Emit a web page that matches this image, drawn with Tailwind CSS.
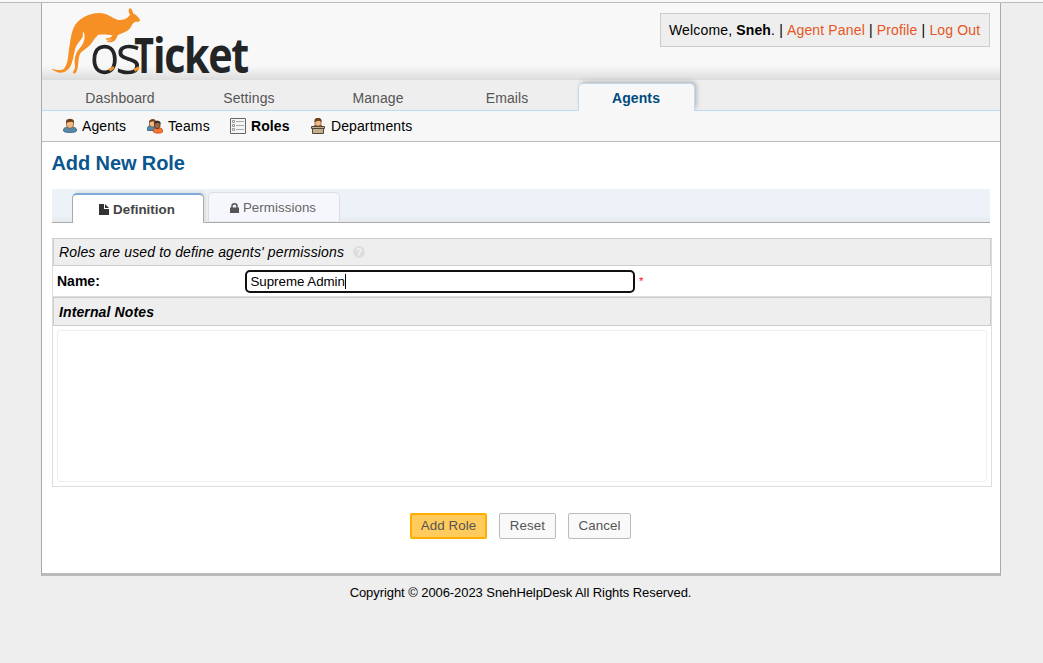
<!DOCTYPE html>
<html lang="en">
<head>
<meta charset="utf-8">
<title>Add New Role</title>
<script src="https://cdn.jsdelivr.net/npm/@tailwindcss/browser@4"></script>
</head>
<body class="h-[663px] overflow-hidden bg-[#eee] font-['Liberation_Sans',Arial,sans-serif] text-[14px] text-black">
<div class="h-[3px] border-b border-[#bbb] bg-[#f7f7f7]"></div>
<div class="ml-[41px] flex h-[573px] w-[960px] flex-col border-x border-b-3 border-x-[#aaa] border-b-[#bbb] bg-white">
  <header class="flex h-[77px] shrink-0 items-start justify-between border-b border-[#ddd] bg-linear-to-b from-[#f8f8f8] from-82% to-[#dfdfdf] pr-[10px] pl-[8px]">
    <svg class="mt-[2px] h-[74px] w-[200px] overflow-visible" viewBox="0 0 600 222" role="img" aria-label="osTicket">
      <path fill="#f79024" d="M4 192C20 193 35 201 44 188C56 172 54 145 59 120C64 88 68 62 88 46C108 29 138 20 164 26C183 31 193 45 211 45C224 44 235 38 240 29C235 22 234 13 239 10C244 8 248 17 249 25C257 28 266 37 270 44C270 49 267 51 260 50C252 50 248 55 243 65C235 80 216 84 205 89C199 94 202 101 191 109C185 113 174 113 169 108C172 105 181 108 186 104C180 104 169 106 166 101C172 99 182 99 188 92C177 88 157 88 145 89C135 96 129 110 121 119C109 132 94 137 89 149C84 162 86 179 82 193C79 202 76 208 70 205C65 202 76 194 75 182C71 162 77 144 89 130C101 116 108 98 101 80C97 84 99 91 98 96C92 106 78 119 74 137C68 164 66 188 47 199C32 208 17 201 4 192Z"/>
      <g fill="#222426" font-family="'Open Sans',sans-serif">
        <text x="121" y="203" font-size="154" font-weight="300" stroke="#222426" stroke-width="4" textLength="86" lengthAdjust="spacingAndGlyphs">o</text>
        <text x="199" y="203" font-size="154" font-weight="300" stroke="#222426" stroke-width="4" textLength="74" lengthAdjust="spacingAndGlyphs">s</text>
        <text x="253" y="203" font-size="146" font-weight="700" textLength="59" lengthAdjust="spacingAndGlyphs">T</text>
        <text x="309" y="203" font-size="146" font-weight="700" letter-spacing="-5" textLength="284" lengthAdjust="spacingAndGlyphs">icket</text>
      </g>
      <path d="M178 196L192 187M253 196L267 188" stroke="#f79024" stroke-width="9"/>
    </svg>
    <p class="mt-[10px] flex h-[34px] w-[330px] items-center border border-[#ccc] bg-[#eee] pl-[8px] whitespace-pre tracking-[0.15px]">Welcome, <b>Sneh</b>. | <a class="text-[#e65524]">Agent Panel</a> | <a class="text-[#e65524]">Profile</a> | <a class="text-[#e65524]">Log Out</a></p>
  </header>
  <nav class="flex h-[31px] shrink-0 items-end border-b border-[#bfd9ee] bg-[#eee] pl-[19.500px] text-center leading-[24px] tracking-[0.1px] text-[#555]">
    <a class="mr-[12px] w-[117px]">Dashboard</a>
    <a class="mr-[12px] w-[117px]">Settings</a>
    <a class="mr-[12px] w-[117px]">Manage</a>
    <a class="mr-[12.500px] w-[117px]">Emails</a>
    <a class="-mb-px h-[28px] w-[117px] rounded-t-[5px] border border-b-0 border-[#bfd9ee] bg-[#f7f7f7] pt-[2px] pr-[1px] font-bold text-[#004a80] shadow-[2px_-2px_5px_-1px_#aaa] [clip-path:inset(-8px_-8px_0_-8px)]">Agents</a>
  </nav>
  <nav class="flex h-[31px] shrink-0 items-center border-b border-[#bbb] bg-[#f7f7f7] pl-[20px] tracking-[0.1px]">
    <a class="flex w-[85px] items-center gap-[4px]">
      <svg class="h-4 w-4" viewBox="0 0 16 16"><path fill="#5489a8" stroke="#36617e" stroke-width=".8" d="M1.500 13C1 10 3 9 8 9s7 1 6.500 4c-1 2-12 2-13 0Z"/><path fill="#f2ba86" stroke="#85502a" stroke-width=".8" d="M4.500 3.500h7v3c0 5-7 5-7 0Z"/><path fill="#70401c" d="M4 5V3c1-3 7-3 8 0v2L10 3.500 7 4Z"/></svg>Agents</a>
    <a class="flex w-[83px] items-center gap-[5px]">
      <svg class="h-4 w-4" viewBox="0 0 16 16"><path fill="#5489a8" stroke="#36617e" stroke-width=".8" d="M.500 12.500C0 8 2 7 6 7l4 2-2 3.500Z"/><path fill="#f2ba86" stroke="#85502a" stroke-width=".8" d="M2.500 3h6v3c0 4-6 4-6 0Z"/><path fill="#70401c" d="M2 4.500c0-4 6-5 7-1v1L6 3Z"/><path fill="#f47532" stroke="#c44615" stroke-width=".8" d="M6.500 14C6 10 8 10 11 10s5 0 4.500 4c-1 1.500-8 1.500-9 0Z"/><path fill="#9b673e" stroke="#38281e" stroke-width=".8" d="M7.500 5.500c0-3 5.500-3 5.500 0v2c0 4-5.500 4-5.500 0Z"/><path fill="#332820" d="M7 6c0-4 6-4 6.500-1v1L11 4.500Z"/></svg>Teams</a>
    <a class="flex w-[80px] items-center gap-[5px] font-bold">
      <svg class="h-4 w-4" viewBox="0 0 16 16"><path fill="#f5f5f5" stroke="#666" d="M.500.500h15v15H.500Z"/><path stroke="#aaa" d="M6 3.500h8M6 7.500h8M6 11.500h8"/><path fill="#fff" stroke="#999" d="M2.500 2.500h2v2h-2ZM2.500 6.500h2v2h-2ZM2.500 10.500h2v2h-2Z"/></svg>Roles</a>
    <a class="flex items-center gap-[5px]">
      <svg class="h-4 w-4" viewBox="0 0 16 16"><path fill="#c95b32" stroke="#70402a" stroke-width=".8" d="M3.500 9C3.500 6 12.500 6 12.500 9Z"/><path fill="#f2ba86" stroke="#85502a" stroke-width=".8" d="M5 2.500h6v3c0 3.500-6 3.500-6 0Z"/><path fill="#70401c" d="M4.500 4V2c1-3 6-3 7 0v2L9 2.500Z"/><path fill="#c5ae8c" stroke="#51483d" d="M2.500 10.500h11v5h-11ZM1.500 8.500h13v2h-13Z"/></svg>Departments</a>
  </nav>
  <main class="flex flex-col pl-[10px]">
    <h2 class="mt-[9px] -ml-[0.500px] h-[24px] text-[20px] leading-[24px] font-bold tracking-[-0.1px] text-[#0a568e]">Add New Role</h2>
    <div class="mt-[14px] flex h-[34px] w-[938px] items-end border-b border-[#aaa] bg-linear-to-b from-[#ecf2f7] from-80% to-[#e5eaee] pl-[20px] text-[13.330px] tracking-[0.05px]">
      <a class="-mb-px flex h-[30px] w-[132px] items-center justify-center gap-[4px] rounded-t-[5px] border border-t-2 border-b-0 border-[#aaa] border-t-[#7ea9d9] bg-white pt-[2px] pr-[2px] font-bold text-[#444] shadow-[2px_-1px_3px_#ddd] [clip-path:inset(-4px_-4px_0_-4px)]">
        <svg class="mb-[2px] h-[11px] w-[10px]" viewBox="0 0 10 11" fill="#333"><path d="M0 0h5v5h5v6H0ZM6 0l4 4H6Z"/></svg>Definition</a>
      <a class="mb-px ml-[4px] flex h-[29px] w-[132px] items-center justify-center gap-[4px] rounded-t-[5px] border border-b-0 border-[#ddd] bg-[#f6f7fc] pt-px pr-[2px] text-[#666]">
        <svg class="h-[10px] w-[9px]" viewBox="0 0 9 10"><path fill="none" stroke="#555" stroke-width="1.500" d="M2 5V3c0-3 5-3 5 0v2"/><path fill="#555" d="M0 4.500h9V10H0Z"/></svg>Permissions</a>
    </div>
    <section class="mt-[15px] flex h-[249px] w-[940px] flex-col border border-[#ddd] border-t-[#ccc]">
      <div class="-mt-px flex h-[28px] w-[938px] shrink-0 items-center border border-[#ccc] bg-[#eee] pl-[5px] tracking-[0.14px] italic">Roles are used to define agents' permissions
        <span class="ml-[9px] flex h-[12px] w-[12px] items-center justify-center rounded-full bg-[#ddd] text-[10px] font-bold tracking-normal text-[#f3f3f3] not-italic">?</span></div>
      <div class="flex h-[31px] shrink-0 items-center border-b border-[#ddd] pl-[4px]">
        <label class="w-[188px] font-bold">Name:</label>
        <div class="flex h-[23px] w-[390px] items-center rounded-[5px] border-2 border-[#101010] bg-white pt-px pl-[3.500px] text-[13.330px] tracking-[-0.03px]">Supreme Admin<span class="h-[15px] w-px bg-black"></span></div>
        <span class="ml-[4px] text-[11px] text-[#f00]">*</span>
      </div>
      <div class="flex h-[29px] w-[938px] shrink-0 items-center border border-[#ccc] bg-[#eee] pt-px pl-[5px] font-bold tracking-[0.12px] italic">Internal Notes</div>
      <div class="mt-[4px] ml-[4px] h-[152px] w-[930px] rounded-[3px] border border-[#eee]"></div>
    </section>
    <div class="mt-[26px] flex h-[26px] gap-[12px] pl-[358px] text-[13.330px] tracking-[0.1px] text-[#555]">
      <button class="w-[77px] rounded-[2px] border-2 border-[#ffae00] bg-[#ffcb5c]">Add Role</button>
      <button class="w-[57px] rounded-[2px] border border-[#bbb] bg-[#f9f9f9]">Reset</button>
      <button class="w-[63px] rounded-[2px] border border-[#bbb] bg-[#f9f9f9]">Cancel</button>
    </div>
  </main>
</div>
<footer class="mt-[8px] pr-[2px] text-center text-[13px] leading-[18px] tracking-[-0.07px]">Copyright © 2006-2023 SnehHelpDesk All Rights Reserved.</footer>
</body>
</html>
